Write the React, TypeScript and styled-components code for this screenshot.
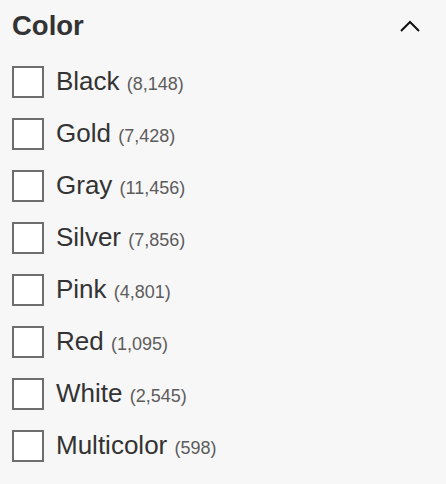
import React from "react";
import styled, { createGlobalStyle } from "styled-components";

const Global = createGlobalStyle`
  html, body { margin: 0; padding: 0; background: #f7f7f7; }
  body { font-family: "Liberation Sans", Arial, Helvetica, sans-serif; }
`;

const Panel = styled.section`
  width: 446px;
  height: 484px;
  box-sizing: border-box;
  padding: 0 26px 0 12px;
  background: #f7f7f7;
`;

const Header = styled.div`
  display: flex;
  align-items: center;
  justify-content: space-between;
  height: 52px;
`;

const Title = styled.h2`
  margin: 0;
  font-size: 27.5px;
  line-height: 52px;
  font-weight: 700;
  color: #333333;
`;

const Toggle = styled.button`
  border: 0;
  padding: 0;
  background: transparent;
  display: flex;
  width: 20px;
  height: 12px;
`;

const List = styled.ul`
  list-style: none;
  margin: 14px 0 0;
  padding: 0;
  display: flex;
  flex-direction: column;
  gap: 20px;
`;

const Row = styled.li`
  display: flex;
  align-items: center;
  gap: 12px;
  height: 32px;
`;

const Box = styled.span`
  width: 32px;
  height: 32px;
  box-sizing: border-box;
  border: 2px solid #6e6e6e;
  background: #ffffff;
  flex: none;
`;

const Label = styled.span`
  font-size: 26px;
  line-height: 32px;
  color: #333333;
  white-space: nowrap;
`;

const Count = styled.span`
  font-size: 18px;
  color: #5c5c5c;
`;

const colors: [string, string][] = [
  ["Black", "8,148"],
  ["Gold", "7,428"],
  ["Gray", "11,456"],
  ["Silver", "7,856"],
  ["Pink", "4,801"],
  ["Red", "1,095"],
  ["White", "2,545"],
  ["Multicolor", "598"],
];

export default function App() {
  return (
    <>
      <Global />
      <Panel>
        <Header>
          <Title>Color</Title>
          <Toggle aria-label="Collapse">
            <svg width="20" height="12" viewBox="0 0 20 12" fill="none">
              <path d="M1 11 L10 2 L19 11" stroke="#111" strokeWidth="2" />
            </svg>
          </Toggle>
        </Header>
        <List>
          {colors.map(([name, count]) => (
            <Row key={name}>
              <Box />
              <Label>
                {name} <Count>({count})</Count>
              </Label>
            </Row>
          ))}
        </List>
      </Panel>
    </>
  );
}
